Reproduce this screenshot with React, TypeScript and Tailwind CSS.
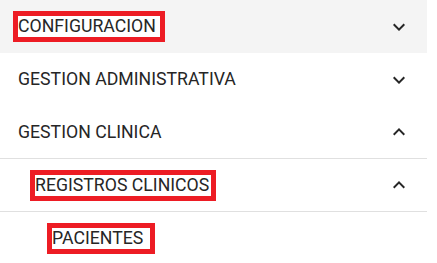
import type { ReactNode } from "react";

type Row = {
  label: string;
  indent: string;
  chevron?: "down" | "up";
  active?: boolean;
  marked?: string;
  divider?: boolean;
};

const rows: Row[] = [
  { label: "CONFIGURACION", indent: "pl-[18px]", chevron: "down", active: true, marked: "pr-[4px]" },
  { label: "GESTION ADMINISTRATIVA", indent: "pl-[18px]", chevron: "down" },
  { label: "GESTION CLINICA", indent: "pl-[18px]", chevron: "up", divider: true },
  { label: "REGISTROS CLINICOS", indent: "pl-[35px]", chevron: "up", marked: "pr-[2px]", divider: true },
  { label: "PACIENTES", indent: "pl-[52px]", marked: "pr-[7px]" },
];

function Chevron({ dir }: { dir: "down" | "up" }) {
  return (
    <svg viewBox="0 0 24 24" className="h-6 w-6 fill-[#262626]">
      {dir === "down" ? (
        <path d="M16.59 8.59 12 13.17 7.41 8.59 6 10l6 6 6-6z" />
      ) : (
        <path d="m12 8-6 6 1.41 1.41L12 10.83l4.59 4.58L18 14z" />
      )}
    </svg>
  );
}

function Marked({ children, pad }: { children: ReactNode; pad: string }) {
  return (
    <span className={`inline-block bg-white leading-[21px] outline-[5px] outline-solid outline-[#ed1c24] ${pad}`}>
      {children}
    </span>
  );
}

export default function App() {
  return (
    <div className="h-[263px] w-[437px] overflow-hidden bg-white font-['Roboto',sans-serif] text-[17.7px] text-[#262626]">
      <ul className="w-[427px]">
        {rows.map((row) => (
          <li
            key={row.label}
            className={[
              "flex h-[53px] items-center justify-between pr-4",
              row.indent,
              row.active ? "bg-[#f4f4f4]" : "",
              row.divider ? "border-b border-[#e0e0e0]" : "",
            ].join(" ")}
          >
            {row.marked ? <Marked pad={row.marked}>{row.label}</Marked> : <span className="leading-[21px]">{row.label}</span>}
            {row.chevron ? <Chevron dir={row.chevron} /> : null}
          </li>
        ))}
      </ul>
    </div>
  );
}
